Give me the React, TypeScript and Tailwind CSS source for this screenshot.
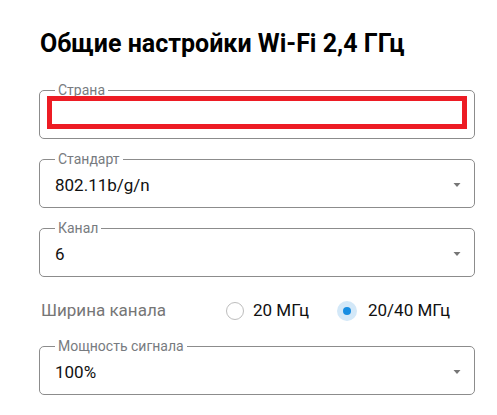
import type { ReactNode } from 'react'

function Caret() {
  return (
    <svg width="8" height="4" viewBox="0 0 8 4" className="shrink-0">
      <path d="M0.5 0h7L4 4z" fill="#767676" />
    </svg>
  )
}

function Field({ label, value, select = true, children }: { label: string; value?: string; select?: boolean; children?: ReactNode }) {
  return (
    <div className="relative">
      <fieldset className="border border-[#8c8c8c] rounded-[5px]">
        <legend className="ml-[15px] px-[3px] text-[14px] leading-4 text-[#777b80]">{label}</legend>
        <div className="flex items-center h-6 ml-[15px] mr-[13px] mt-[6px] mb-[10px]">
          <span className="flex-1 text-[17px] leading-6 text-[#111]">{value}</span>
          {select && <Caret />}
        </div>
      </fieldset>
      {children}
    </div>
  )
}

export default function App() {
  return (
    <div className="min-h-screen bg-white font-['Roboto','Liberation_Sans',sans-serif]">
      <div className="flex flex-col pl-[39px] pr-[22px] pt-[30px]">
        <h1 className="text-[25px] leading-[28px] font-bold text-black pl-[1px]">Общие настройки Wi-Fi 2,4 ГГц</h1>

        <div className="mt-[24px]">
          <Field label="Страна" select={false}>
            {/* annotation highlight */}
            <div className="absolute left-[8px] top-[14px] w-[420px] h-[33px] border-[5px] border-[#ed1c24]" />
          </Field>
        </div>

        <div className="mt-[12px]">
          <Field label="Стандарт" value="802.11b/g/n" />
        </div>

        <div className="mt-[12px]">
          <Field label="Канал" value="6" />
        </div>

        <div className="mt-[13px] h-[42px] flex items-center text-[17px]">
          <span className="w-[187px] pl-[2px] text-[#767676]">Ширина канала</span>
          <label className="flex items-center">
            <span className="w-[18px] h-[18px] rounded-full border border-[#bdbdbd]" />
            <span className="ml-[9px] text-[#111]">20 МГц</span>
          </label>
          <label className="flex items-center ml-[28px]">
            <span className="w-5 h-5 rounded-full bg-[#d3e8f8] flex items-center justify-center">
              <span className="w-[8px] h-[8px] rounded-full bg-[#168de2]" />
            </span>
            <span className="ml-[11px] text-[#111]">20/40 МГц</span>
          </label>
        </div>

        <div className="mt-[6px]">
          <Field label="Мощность сигнала" value="100%" />
        </div>
      </div>
    </div>
  )
}
